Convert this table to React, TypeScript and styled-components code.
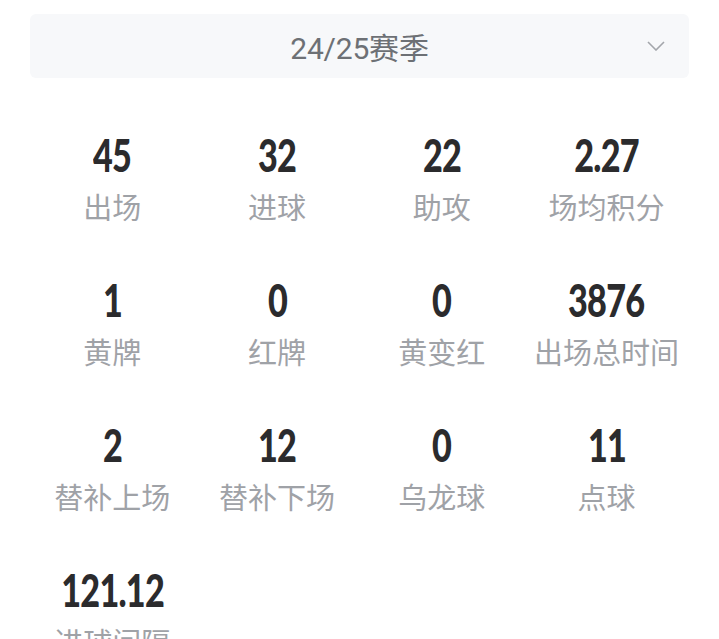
import React from "react";
import styled, { createGlobalStyle } from "styled-components";

const GlobalStyle = createGlobalStyle`
  html, body {
    margin: 0;
    padding: 0;
    background: #ffffff;
  }
  body {
    font-family: "Noto Sans CJK SC", "Noto Sans", sans-serif;
  }
`;

const Page = styled.div`
  padding: 14px 30px 0;
  display: flex;
  flex-direction: column;
  gap: 52px;
`;

const SeasonSelect = styled.div`
  position: relative;
  height: 64px;
  border-radius: 6px;
  background: #f7f8fa;
  display: flex;
  align-items: center;
  justify-content: center;
`;

const SeasonText = styled.span`
  font-family: Roboto, "Noto Sans CJK SC", sans-serif;
  font-size: 30px;
  color: #6d7075;
  letter-spacing: -0.2px;
`;

const Chevron = styled.svg`
  position: absolute;
  right: 24px;
  top: 50%;
  margin-top: -5px;
`;

const StatGrid = styled.div`
  display: grid;
  grid-template-columns: repeat(4, 1fr);
  row-gap: 51px;
`;

const Stat = styled.div`
  display: flex;
  flex-direction: column;
  align-items: center;
  gap: 8px;
`;

const Value = styled.div`
  font-family: Lato, "Liberation Sans", sans-serif;
  font-weight: 900;
  font-size: 45px;
  line-height: 50px;
  color: #2b2b2d;
  white-space: nowrap;
  letter-spacing: -1px;
  transform: scaleX(0.76);
`;

const Label = styled.div`
  font-family: "Noto Sans CJK SC", sans-serif;
  font-size: 29px;
  line-height: 36px;
  color: #9fa2a7;
  white-space: nowrap;
`;

const stats: [string, string][] = [
  ["45", "出场"],
  ["32", "进球"],
  ["22", "助攻"],
  ["2.27", "场均积分"],
  ["1", "黄牌"],
  ["0", "红牌"],
  ["0", "黄变红"],
  ["3876", "出场总时间"],
  ["2", "替补上场"],
  ["12", "替补下场"],
  ["0", "乌龙球"],
  ["11", "点球"],
  ["121.12", "进球间隔"],
];

export default function App() {
  return (
    <>
      <GlobalStyle />
      <Page>
        <SeasonSelect>
          <SeasonText>24/25赛季</SeasonText>
          <Chevron width="18" height="10" viewBox="0 0 18 10">
            <path d="M1 1 L9 9 L17 1" fill="none" stroke="#a3a6ab" strokeWidth="1.6" />
          </Chevron>
        </SeasonSelect>
        <StatGrid>
          {stats.map(([v, l], i) => (
            <Stat key={i}>
              <Value>{v}</Value>
              <Label>{l}</Label>
            </Stat>
          ))}
        </StatGrid>
      </Page>
    </>
  );
}
